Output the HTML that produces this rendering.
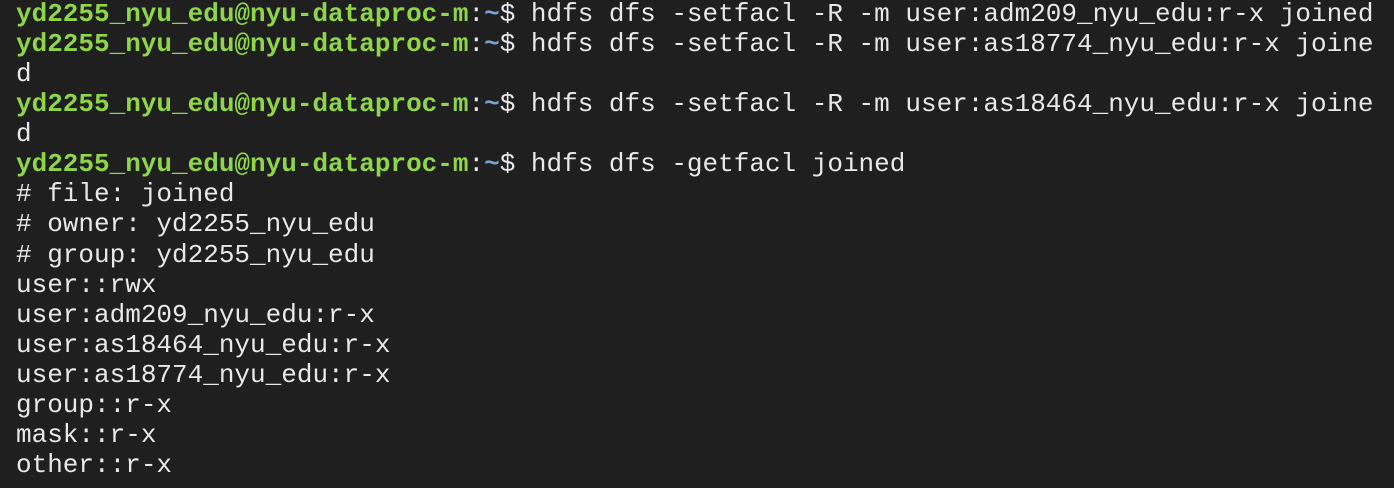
<!DOCTYPE html>
<html><head><meta charset="utf-8"><style>
html,body{margin:0;padding:0;background:#1f1f1f;width:1394px;height:488px;overflow:hidden}
pre{margin:0;padding:0 0 0 16px;position:relative;top:-1px;font-family:"Liberation Mono",monospace;font-size:26px;line-height:30.07px;color:#e8e8e8;white-space:pre}
.g{color:#8fd54a;font-weight:bold}
.b{color:#7aa2d6;font-weight:bold}
</style></head><body><pre><span class="g">yd2255_nyu_edu@nyu-dataproc-m</span>:<span class="b">~</span>$ hdfs dfs -setfacl -R -m user:adm209_nyu_edu:r-x joined
<span class="g">yd2255_nyu_edu@nyu-dataproc-m</span>:<span class="b">~</span>$ hdfs dfs -setfacl -R -m user:as18774_nyu_edu:r-x joine
d
<span class="g">yd2255_nyu_edu@nyu-dataproc-m</span>:<span class="b">~</span>$ hdfs dfs -setfacl -R -m user:as18464_nyu_edu:r-x joine
d
<span class="g">yd2255_nyu_edu@nyu-dataproc-m</span>:<span class="b">~</span>$ hdfs dfs -getfacl joined
# file: joined
# owner: yd2255_nyu_edu
# group: yd2255_nyu_edu
user::rwx
user:adm209_nyu_edu:r-x
user:as18464_nyu_edu:r-x
user:as18774_nyu_edu:r-x
group::r-x
mask::r-x
other::r-x</pre></body></html>
